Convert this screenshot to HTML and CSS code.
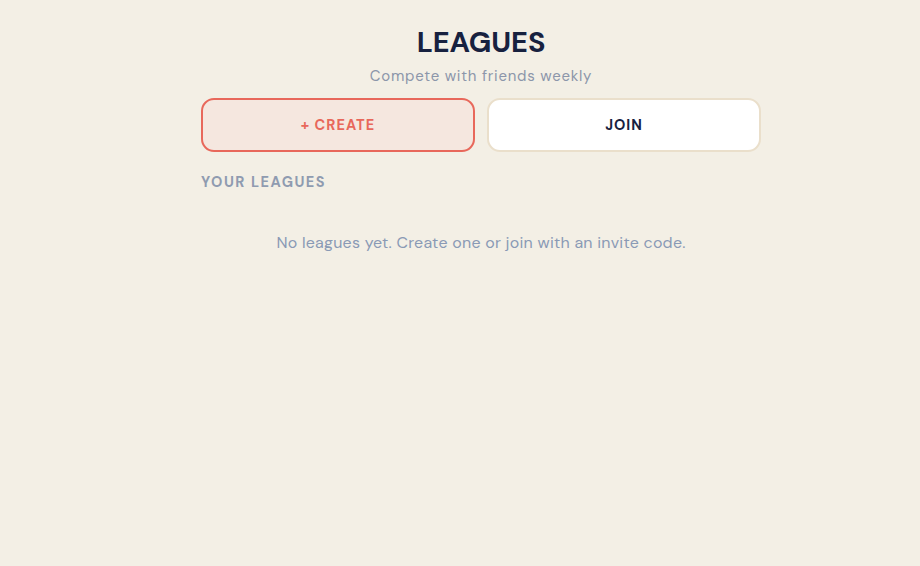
FILE: index.html
```html
<!DOCTYPE html>
<html lang="en">
<head>
    <meta charset="UTF-8">
    <meta name="viewport" content="width=device-width, initial-scale=1.0">
    <title>Leagues</title>
    <link rel="stylesheet" href="styles.css">
</head>
<body>
    <main class="page">
        <header class="page-header">
            <h1>LEAGUES</h1>
            <p class="subtitle">Compete with friends weekly</p>
        </header>

        <div class="actions">
            <button class="btn btn-create" type="button">+ CREATE</button>
            <button class="btn btn-join" type="button">JOIN</button>
        </div>

        <section class="leagues">
            <h2 class="section-title">YOUR LEAGUES</h2>
            <p class="empty">No leagues yet. Create one or join with an invite code.</p>
        </section>
    </main>
</body>
</html>
```

FILE: styles.css
```css
html, body {
    height: 100%;
}
body {
    margin: 0;
    font-family: "DM Sans", Inter, "Noto Sans", sans-serif;
    background-color: #f3efe5;
    color: #1a2540;
}
.page {
    max-width: 560px;
    margin: 0 auto;
    padding: 24px 0 0 42px;
}
.page-header {
    text-align: center;
}
h1 {
    margin: 0;
    font-size: 29px;
    font-weight: 700;
    line-height: 36px;
    color: #17213f;
    letter-spacing: -0.1px;
}
.subtitle {
    margin: 6px 0 0;
    font-size: 15px;
    line-height: 20px;
    color: #8c96aa;
    letter-spacing: 0.75px;
}
.actions {
    display: grid;
    grid-template-columns: 1fr 1fr;
    gap: 12px;
    margin-top: 12px;
}
.btn {
    height: 54px;
    border-radius: 13px;
    border: 2px solid;
    font-family: inherit;
    font-size: 14.5px;
    font-weight: 700;
    letter-spacing: 1px;
    cursor: pointer;
}
.btn-create {
    background-color: #f5e7df;
    border-color: #e8685b;
    color: #e8685b;
}
.btn-join {
    background-color: #fff;
    border-color: #eadfcb;
    color: #17213f;
}
.section-title {
    margin: 21px 0 0;
    font-size: 14.5px;
    font-weight: 700;
    line-height: 18px;
    letter-spacing: 1.5px;
    color: #8f9bb0;
}
.empty {
    margin: 41px 0 0;
    text-align: center;
    font-size: 16px;
    line-height: 22px;
    color: #8a9ab5;
    letter-spacing: 0.24px;
}
```
